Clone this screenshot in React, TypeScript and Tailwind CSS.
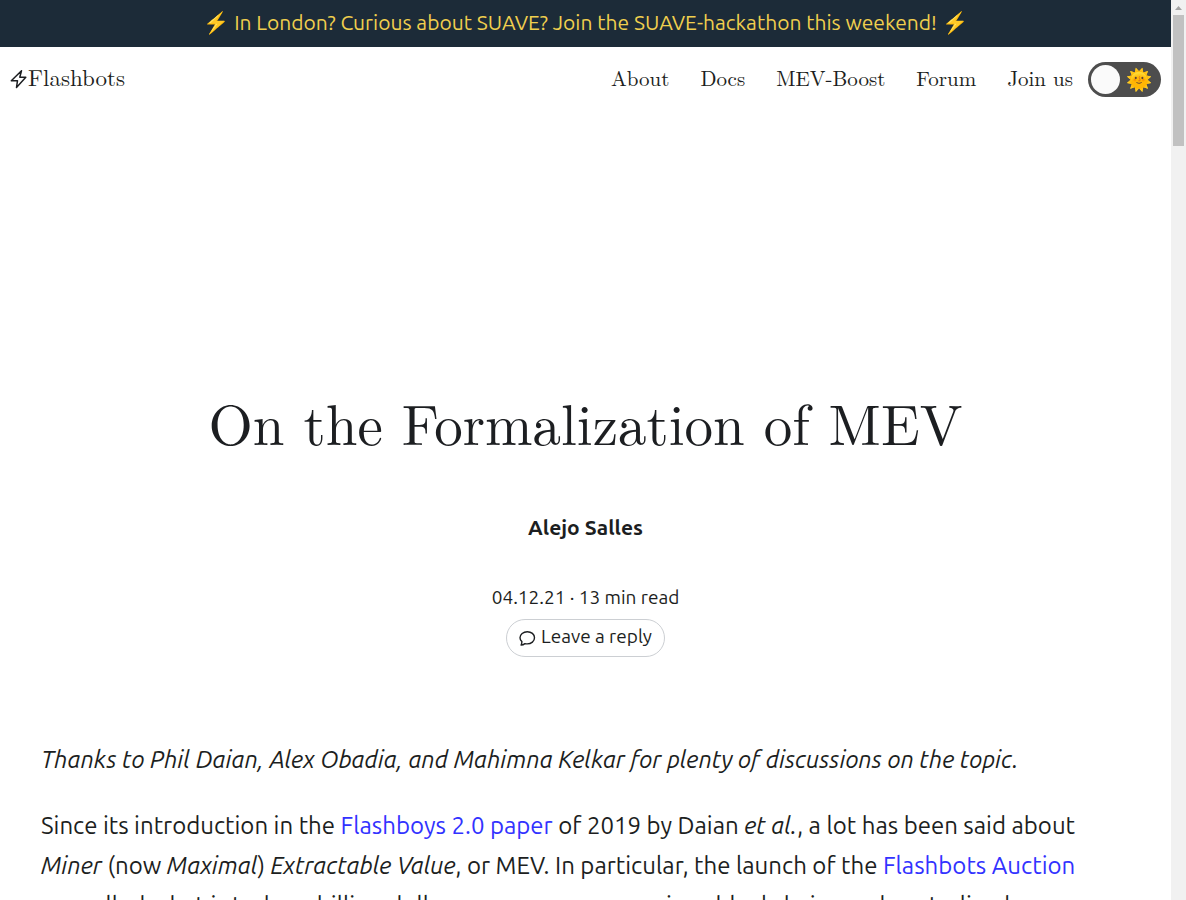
const links = ["About", "Docs", "MEV-Boost", "Forum", "Join us"];

function BoltIcon() {
  return (
    <svg viewBox="0 0 18 20" className="h-[20px] w-[18px]" fill="none" stroke="currentColor" strokeWidth="1.5" strokeLinejoin="round" aria-hidden="true">
      <path d="M11.5 1.8 1.3 11.7H7.5L6.5 18.5 15.8 8.3H9.8Z" />
    </svg>
  );
}

function CommentIcon() {
  return (
    <svg viewBox="0 0 17 17" className="mt-[4px] size-[17px]" fill="none" stroke="currentColor" strokeWidth="1.4" strokeLinecap="round" strokeLinejoin="round" aria-hidden="true">
      <path d="M8.3 1.7C4.3 1.7 1 4.3 1 7.7c0 1.5.7 2.9 1.9 3.9 0 1.2-.2 2.4-.8 3.5 1.5-.1 2.7-.6 3.800-1.500.8.2 1.600.3 2.400.3 4 0 7.200-2.700 7.200-6.200S12.300 1.700 8.300 1.700Z" />
    </svg>
  );
}

export default function App() {
  return (
    <div className="flex h-screen overflow-hidden bg-white font-['Ubuntu_Regular','Ubuntu','Noto_Sans',sans-serif] text-[#1c1e21]">
      <div className="min-w-0 flex-1 overflow-hidden">
        <div className="flex h-[47px] items-center justify-center bg-[#1c2b38] pb-[2px] text-[21px] text-[#f0cf4e]">
          <p className="whitespace-nowrap">⚡ In London? Curious about SUAVE? Join the SUAVE-hackathon this weekend! ⚡</p>
        </div>
        <header className="flex h-[64px] items-center justify-between px-[10px] font-['Latin_Modern_Roman','Liberation_Serif',serif]">
          <a href="#home" className="flex items-center text-[23px]">
            <BoltIcon />
            <span className="pb-[4px]">Flashbots</span>
          </a>
          <nav className="flex items-center gap-[31px] text-[21px]">
            {links.map((l) => <a key={l} href={`#${l}`} className="pb-[2px]">{l}</a>)}
            <button type="button" role="switch" aria-checked="false" aria-label="Dark mode" className="-ml-[16px] flex h-[35px] w-[73px] items-center justify-between rounded-full bg-[#4d4d4d] pr-[9px] pl-[3px]">
              <span className="size-[29px] rounded-full bg-[#fafafa]" />
              <span className="pb-[3px] text-[21px] leading-[32px]">🌞</span>
            </button>
          </nav>
        </header>
        <main>
          <div className="flex flex-col items-center pt-[270px]">
            <h1 className="text-center font-['Latin_Modern_Roman','Liberation_Serif',serif] text-[57px] leading-[82px]">On the Formalization of MEV</h1>
            <p className="mt-[48px] text-[21px] leading-[32px] font-['Ubuntu',sans-serif] font-bold">Alejo Salles</p>
            <p className="mt-[38px] text-[19px] leading-[32px]">04.12.21 · 13 min read</p>
            <a href="#reply" className="mt-[6px] flex h-[38px] items-center gap-[5px] rounded-full border border-[#cccfd3] px-[12px] pb-[3px] text-[19px]">
              <CommentIcon />
              Leave a reply
            </a>
          </div>
          <article className="px-[41px] pt-[83px] text-[24px] leading-[40px] [&_em]:font-['Ubuntu',sans-serif]">
            <p className="mb-[26px] font-['Ubuntu',sans-serif] italic">Thanks to Phil Daian, Alex Obadia, and Mahimna Kelkar for plenty of discussions on the topic.</p>
            <p>
              Since its introduction in the <a href="#paper" className="text-[#3232ff]">Flashboys 2.0 paper</a> of 2019 by Daian <em>et al.</em>, a lot has been said about{" "}
              <em>Miner</em> (now <em>Maximal</em>) <em>Extractable Value</em>, or MEV. In particular, the launch of the <a href="#auction" className="text-[#3232ff]">Flashbots Auction</a>{" "}
              propelled what is today a billion dollar economy across various blockchains and centralized
            </p>
          </article>
        </main>
      </div>
      <div className="flex w-[15px] shrink-0 flex-col items-center bg-[#f1f1f1]" aria-hidden="true">
        <svg viewBox="0 0 15 15" className="size-[15px]"><path d="M4 10 7.5 6 11 10Z" fill="#a3a3a3" /></svg>
        <div className="h-[131px] w-[11px] bg-[#c1c1c1]" />
      </div>
    </div>
  );
}
